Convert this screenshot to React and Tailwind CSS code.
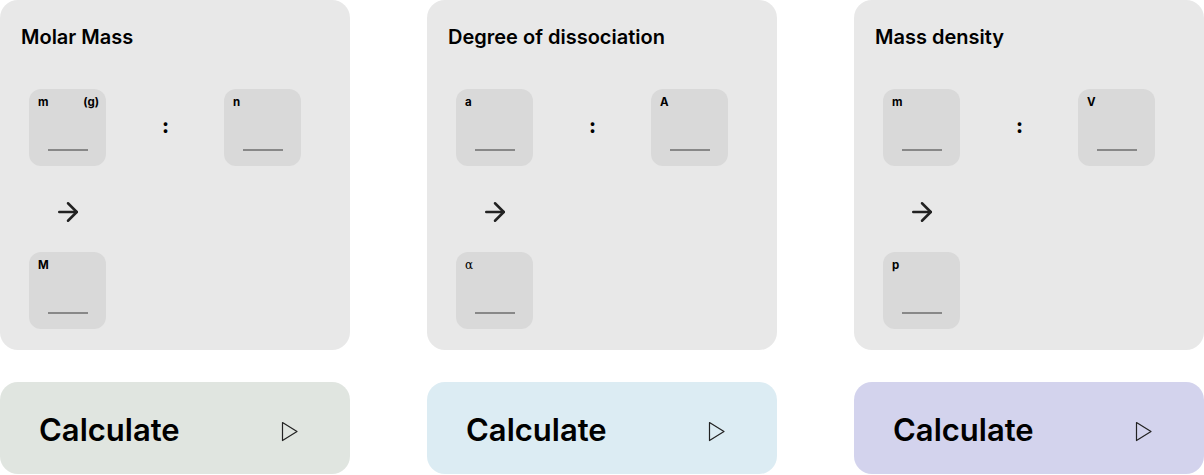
import { ArrowRight } from "lucide-react";

const calcs = [
  {
    title: "Molar Mass",
    left: { label: "m", unit: "(g)" },
    right: { label: "n" },
    result: { label: "M" },
    btn: "bg-[#e0e5e0]",
  },
  {
    title: "Degree of dissociation",
    left: { label: "a" },
    right: { label: "A" },
    result: { label: "α", thin: true },
    btn: "bg-[#dcecf3]",
  },
  {
    title: "Mass density",
    left: { label: "m" },
    right: { label: "V" },
    result: { label: "p" },
    btn: "bg-[#d3d3ed]",
  },
];

function Field({ label, unit, thin }) {
  return (
    <div className="w-[77px] h-[77px] rounded-[12px] bg-[#d9d9d9] flex flex-col">
      <div className="flex justify-between pl-[9px] pr-[7px] pt-[5px] text-[11.5px] leading-[16px] text-black">
        <span className={thin ? "font-normal font-['DejaVu_Serif',serif] text-[12px]" : "font-bold"}>{label}</span>
        {unit && <span className="font-bold">{unit}</span>}
      </div>
      <div className="mt-auto mb-[15px] mx-auto w-[40px] h-[2px] bg-[#888888]" />
    </div>
  );
}

function Card({ c }) {
  return (
    <div className="w-[350px] flex flex-col gap-[32px]">
      <div className="h-[350px] rounded-[18px] bg-[#e8e8e8] pt-[23px] pl-[21px]">
        <h2 className="text-[20px] leading-[28px] font-semibold text-black">{c.title}</h2>
        <div className="mt-[38px] ml-[8px] w-[272px] flex items-center justify-between">
          <Field {...c.left} />
          <span className="font-extrabold text-[20px] leading-none text-black pb-[3px] pl-[1px]">:</span>
          <Field {...c.right} />
        </div>
        <div className="ml-[8px] w-[77px] h-[86px] pt-[6px] flex items-center justify-center">
          <ArrowRight size={30} strokeWidth={2} className="text-[#222]" />
        </div>
        <div className="ml-[8px]">
          <Field {...c.result} />
        </div>
      </div>
      <button className={`h-[92px] rounded-[18px] ${c.btn} flex items-center justify-between pt-[5px] pl-[39px] pr-[51px]`}>
        <span className="text-[31px] font-semibold text-black">Calculate</span>
        <svg width="18" height="21" viewBox="0 0 18 21" fill="none" stroke="#222" strokeWidth="1.2" strokeLinejoin="round" className="mt-[1px]">
          <path d="M1.5 1.5 L16 10.5 L1.5 19.5 Z" />
        </svg>
      </button>
    </div>
  );
}

export default function App() {
  return (
    <div className="w-[1204px] h-[475px] bg-white flex justify-between font-['Inter',sans-serif]">
      {calcs.map((c) => (
        <Card key={c.title} c={c} />
      ))}
    </div>
  );
}
